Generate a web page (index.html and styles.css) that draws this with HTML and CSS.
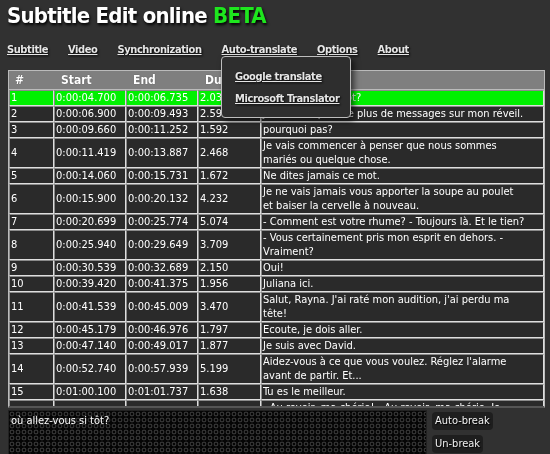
FILE: index.html
```html
<!DOCTYPE html>
<html>
<head>
<meta charset="utf-8">
<link rel="stylesheet" href="styles.css">
</head>
<body>
<div class="app">
  <h1 class="title">Subtitle Edit online <span class="beta">BETA</span></h1>
  <nav class="menu">
    <a href="#">Subtitle</a>
    <a href="#">Video</a>
    <a href="#">Synchronization</a>
    <a href="#">Auto-translate</a>
    <a href="#">Options</a>
    <a href="#">About</a>
  </nav>
  <div class="dropdown">
    <a href="#">Google translate</a>
    <a href="#">Microsoft Translator</a>
  </div>
  <div class="grid">
    <div class="grid-head">
      <span class="h-num">#</span>
      <span class="h-start">Start</span>
      <span class="h-end">End</span>
      <span class="h-dur">Duration</span>
      <span class="h-text">Text</span>
    </div>
    <div class="grid-body">
      <table class="subs">
        <colgroup><col class="c-num"><col class="c-start"><col class="c-end"><col class="c-dur"><col class="c-text"></colgroup>
        <tr class="sel"><td>1</td><td>0:00:04.700</td><td>0:00:06.735</td><td>2.035</td><td>où allez-vous si tôt?</td></tr>
        <tr><td>2</td><td>0:00:06.900</td><td>0:00:09.493</td><td>2.593</td><td>Je ne veux pas lire plus de messages sur mon réveil.</td></tr>
        <tr><td>3</td><td>0:00:09.660</td><td>0:00:11.252</td><td>1.592</td><td>pourquoi pas?</td></tr>
        <tr><td>4</td><td>0:00:11.419</td><td>0:00:13.887</td><td>2.468</td><td>Je vais commencer à penser que nous sommes<br>mariés ou quelque chose.</td></tr>
        <tr><td>5</td><td>0:00:14.060</td><td>0:00:15.731</td><td>1.672</td><td>Ne dites jamais ce mot.</td></tr>
        <tr><td>6</td><td>0:00:15.900</td><td>0:00:20.132</td><td>4.232</td><td>Je ne vais jamais vous apporter la soupe au poulet<br>et baiser la cervelle à nouveau.</td></tr>
        <tr><td>7</td><td>0:00:20.699</td><td>0:00:25.774</td><td>5.074</td><td>- Comment est votre rhume? - Toujours là. Et le tien?</td></tr>
        <tr><td>8</td><td>0:00:25.940</td><td>0:00:29.649</td><td>3.709</td><td>- Vous certainement pris mon esprit en dehors. -<br>Vraiment?</td></tr>
        <tr><td>9</td><td>0:00:30.539</td><td>0:00:32.689</td><td>2.150</td><td>Oui!</td></tr>
        <tr><td>10</td><td>0:00:39.420</td><td>0:00:41.375</td><td>1.956</td><td>Juliana ici.</td></tr>
        <tr><td>11</td><td>0:00:41.539</td><td>0:00:45.009</td><td>3.470</td><td>Salut, Rayna. J'ai raté mon audition, j'ai perdu ma<br>tête!</td></tr>
        <tr><td>12</td><td>0:00:45.179</td><td>0:00:46.976</td><td>1.797</td><td>Ecoute, je dois aller.</td></tr>
        <tr><td>13</td><td>0:00:47.140</td><td>0:00:49.017</td><td>1.877</td><td>Je suis avec David.</td></tr>
        <tr><td>14</td><td>0:00:52.740</td><td>0:00:57.939</td><td>5.199</td><td>Aidez-vous à ce que vous voulez. Réglez l'alarme<br>avant de partir. Et...</td></tr>
        <tr><td>15</td><td>0:01:00.100</td><td>0:01:01.737</td><td>1.638</td><td>Tu es le meilleur.</td></tr>
        <tr><td>16</td><td>0:01:02.539</td><td>0:01:06.578</td><td>4.039</td><td>- Au revoir, ma chérie! - Au revoir, ma chérie. Je<br>vous aime.</td></tr>
        <tr><td>17</td><td>0:01:07.200</td><td>0:01:08.911</td><td>1.711</td><td>Bonne nuit.</td></tr>
      </table>
    </div>
  </div>
  <div class="editor">
    <textarea class="text-edit">où allez-vous si tôt?</textarea>
    <div class="buttons">
      <button class="btn">Auto-break</button>
      <button class="btn">Un-break</button>
    </div>
  </div>
</div>
</body>
</html>
```
FILE: styles.css
```css
html, body {
  margin: 0;
  padding: 0;
  background: #313131;
  overflow: hidden;
}
body {
  font-family: "DejaVu Sans Condensed", "DejaVu Sans", sans-serif;
  color: #fff;
}
.app {
  position: relative;
  padding: 0 5px 0 8px;
  width: 537px;
}
.title {
  margin: 0;
  padding-top: 3px;
  height: 34px;
  box-sizing: border-box;
  font-size: 22px;
  font-weight: bold;
  color: #fff;
  letter-spacing: -0.75px;
  margin-left: -1px;
  text-shadow: 1px 2px 3px #000;
}
.beta {
  color: #1ee61e;
}
.menu {
  display: flex;
  gap: 20px;
  padding-top: 9px;
  height: 27px;
  box-sizing: border-box;
  margin-left: -1px;
}
.menu a, .dropdown a {
  color: #e6e6e6;
  font-size: 11px;
  font-weight: bold;
  letter-spacing: -0.4px;
  text-decoration: underline;
  text-shadow: 1px 1px 2px #000;
  white-space: nowrap;
}
.dropdown {
  position: absolute;
  left: 221px;
  top: 56px;
  width: 130px;
  height: 62px;
  background: #2e2e2e;
  border: 1px solid #bdbdbd;
  border-radius: 4px;
  box-shadow: 3px 3px 6px rgba(0,0,0,0.6);
  display: flex;
  flex-direction: column;
  gap: 9px;
  padding: 13px 0 0 13px;
  box-sizing: border-box;
  z-index: 5;
}
.grid {
  margin-top: 9px;
  border: 1px solid #bbb;
  border-bottom: 2px solid #555;
  width: 537px;
  box-sizing: border-box;
}
.grid-head {
  display: grid;
  grid-template-columns: 45px 72px 72px 63px 1fr;
  height: 18px;
  background: #7f7f7f;
  font-size: 12px;
  font-weight: bold;
  line-height: 18px;
  color: #fff;
  text-shadow: 0 0 1px #444;
}
.grid-head span {
  padding-left: 7px;
  overflow: hidden;
  white-space: nowrap;
}
.grid-head .h-num { padding-left: 6px; }
.grid-body {
  height: 316px;
  overflow-y: scroll;
  border-top: 1px solid #bbb;
}
.subs {
  width: 100%;
  border-collapse: separate;
  border-spacing: 0;
  table-layout: fixed;
  background: #2a2a2a;
  font-size: 11px;
  line-height: 14px;
}
.c-num { width: 45px; }
.c-start { width: 72px; }
.c-end { width: 72px; }
.c-dur { width: 63px; }
.subs td {
  padding: 0 0 0 1px;
  border-top: 1px solid #8a8a8a;
  border-left: 1px solid #8a8a8a;
  border-bottom: 1px solid #dedede;
  border-right: 1px solid #dedede;
  white-space: nowrap;
  overflow: hidden;
  color: #fff;
  vertical-align: middle;
}
.subs tr.sel td {
  background: #00f000;
}
.editor {
  display: flex;
  gap: 5px;
  margin-top: 2px;
}
.text-edit {
  width: 419px;
  height: 52px;
  margin: 0;
  padding: 3px 2px;
  box-sizing: border-box;
  border: 1px solid #222;
  resize: both;
  font-family: "DejaVu Sans Condensed", "DejaVu Sans", sans-serif;
  font-size: 11px;
  color: #fff;
  background-color: #050505;
  background-image: radial-gradient(circle at 3px 3px, transparent 1.1px, #333 1.6px, #333 2.2px, transparent 2.7px);
  background-size: 6px 6px;
}
.buttons {
  display: flex;
  flex-direction: column;
  align-items: flex-start;
  gap: 5px;
  padding-top: 2px;
}
.btn {
  font-family: "DejaVu Sans Condensed", "DejaVu Sans", sans-serif;
  font-size: 11px;
  color: #f0f0f0;
  background: #1e1e1e;
  border: none;
  border-radius: 4px;
  height: 18px;
  padding: 0 3px;
  line-height: 18px;
  text-shadow: 1px 1px 1px #000;
}
```
